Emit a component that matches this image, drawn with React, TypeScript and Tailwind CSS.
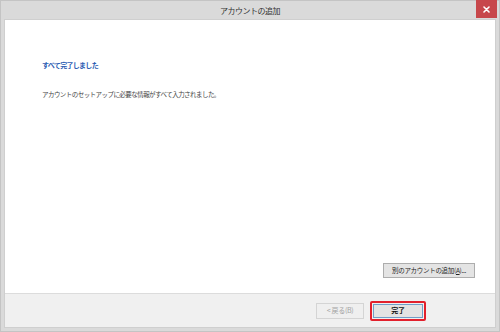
const jp = "font-['Meiryo_UI','Noto_Sans_CJK_JP',sans-serif]";

function Btn({
  children,
  className,
}: {
  children: React.ReactNode;
  className?: string;
}) {
  return (
    <div
      className={`flex items-center justify-center border tracking-[-0.3px] ${className ?? ''}`}
    >
      {children}
    </div>
  );
}

export default function App() {
  return (
    <div
      className={`w-[500px] h-[332px] bg-[#dadada] border border-[#c4c4c4] flex flex-col ${jp}`}
    >
      {/* title bar */}
      <div className="relative h-[18px] shrink-0 flex items-center justify-center">
        <span className="text-[8px] tracking-[-0.5px] text-[#333] mt-[2px]">
          アカウントの追加
        </span>
        <div className="absolute right-[2px] top-[-1px] w-[21px] h-[18px] bg-[#c7474b] flex items-center justify-center">
          <svg width="7" height="7" viewBox="0 0 7 7">
            <path
              d="M1 1 L6 6 M6 1 L1 6"
              stroke="#fff"
              strokeWidth="1.6"
              strokeLinecap="round"
            />
          </svg>
        </div>
      </div>

      {/* panel */}
      <div className="flex-1 mx-[3px] mb-[3px] border border-[#cfcfcf] flex flex-col">
        <div className="flex-1 bg-white flex flex-col pl-[37px] pr-[20px]">
          <div className="mt-[40px] text-[7px] tracking-[-0.7px] font-bold text-[#2b5cb2]">
            すべて完了しました
          </div>
          <div className="mt-[19px] text-[6.5px] tracking-[-0.55px] text-[#444]">
            アカウントのセットアップに必要な情報がすべて入力されました。
          </div>
          <div className="flex-1" />
          <div className="flex justify-end mb-[15px]">
            <Btn className="w-[92px] h-[15px] bg-[#e4e4e4] border-[#adadad] text-[#222] text-[6.5px]">
              別のアカウントの追加(<span className="underline">A</span>)...
            </Btn>
          </div>
        </div>
        <div className="h-[34px] shrink-0 bg-[#f0f0f0] border-t border-[#dcdcdc] flex items-center justify-end pr-[69px] gap-[6px]">
          <Btn className="w-[48px] h-[16px] bg-[#efefef] border-[#d4d4d4] text-[#a3a3a3] text-[7px]">
            &lt; 戻る(B)
          </Btn>
          <div className="border-2 border-[#e2202c] rounded-[2px] p-[1px]">
            <Btn className="w-[50px] h-[14px] bg-[#e3e3e3] border-[#6f9ec8] text-[#111] font-bold text-[7px]">
              完了
            </Btn>
          </div>
        </div>
      </div>
    </div>
  );
}
